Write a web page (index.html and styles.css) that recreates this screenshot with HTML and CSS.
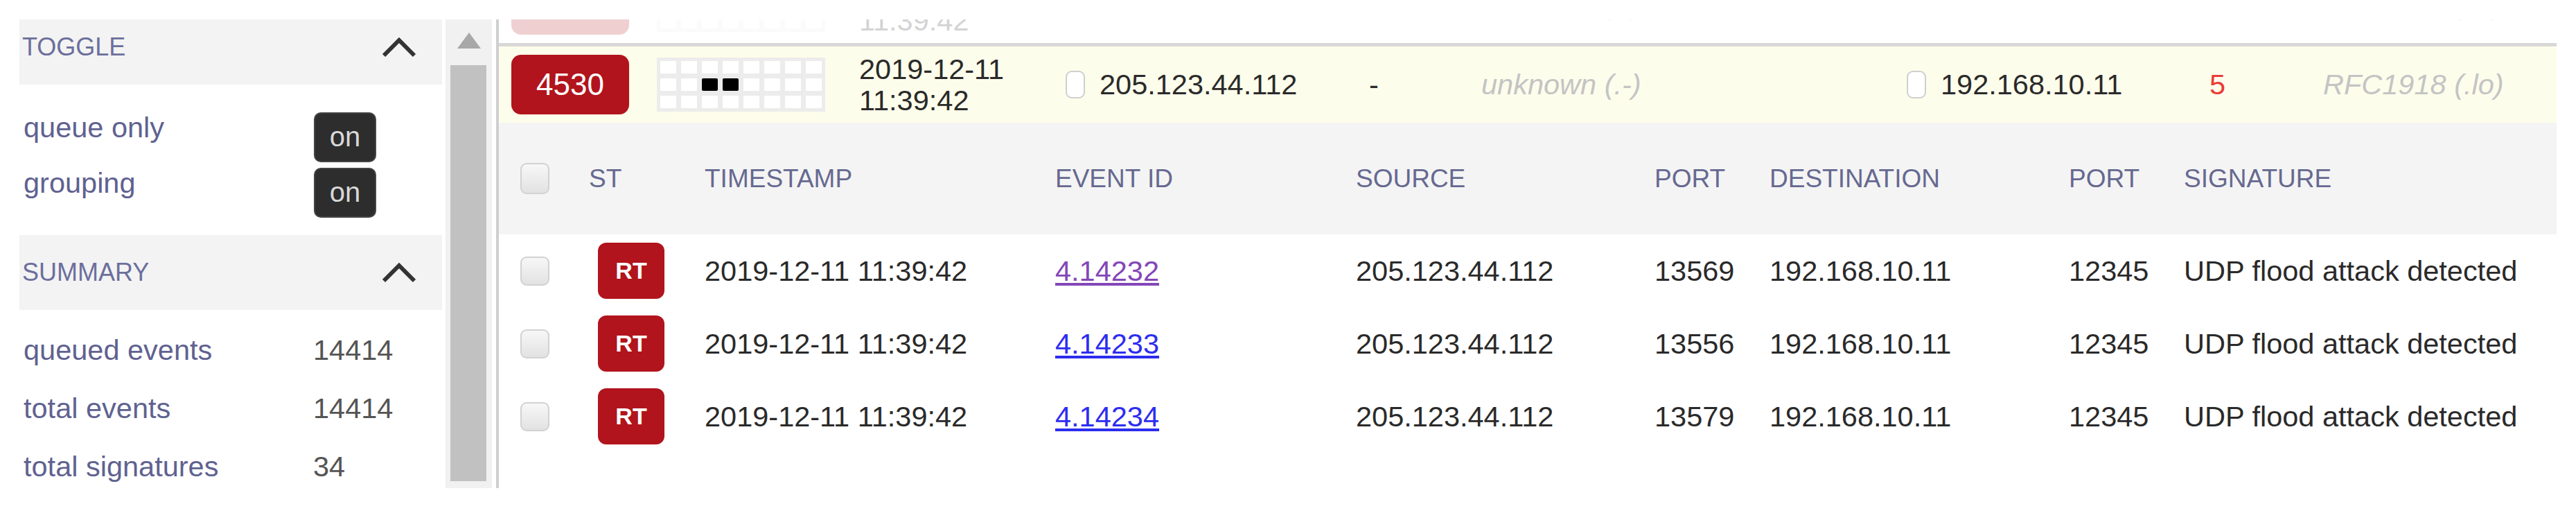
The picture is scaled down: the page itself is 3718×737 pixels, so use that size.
FILE: index.html
```html
<!DOCTYPE html>
<html lang="en">
<head>
  <meta charset="UTF-8" />
  <title>Event queue</title>
  <link rel="stylesheet" href="styles.css">
</head>
<body>

  <div class="app">

    <aside class="sidebar">
      <div class="side-scroll">
        <div class="side-content">

          <div class="panel-head">
            <span>TOGGLE</span>
            <svg class="chevron" width="50" height="30" viewBox="0 0 50 30"><polyline points="3,27 25,5 47,27" /></svg>
          </div>
          <div class="toggles">
            <div class="toggle-row"><span class="label">queue only</span><span class="switch">on</span></div>
            <div class="toggle-row"><span class="label">grouping</span><span class="switch">on</span></div>
          </div>

          <div class="panel-head">
            <span>SUMMARY</span>
            <svg class="chevron" width="50" height="30" viewBox="0 0 50 30"><polyline points="3,27 25,5 47,27" /></svg>
          </div>
          <div class="summary">
            <div class="stat"><span class="label">queued events</span><span class="val">14414</span></div>
            <div class="stat"><span class="label">total events</span><span class="val">14414</span></div>
            <div class="stat"><span class="label">total signatures</span><span class="val">34</span></div>
          </div>

        </div>
      </div>
      <div class="scrollbar">
        <span class="arrow"></span>
        <span class="thumb"></span>
      </div>
    </aside>

    <main class="events">
      <div class="event-list">

        <div class="group-row faded">
          <span class="count">4529</span>
          <span class="cells">
            <i></i><i></i><i></i><i></i><i></i><i></i><i></i><i></i>
            <i></i><i class="on"></i><i></i><i></i><i></i><i></i><i></i><i></i>
            <i></i><i></i><i></i><i></i><i></i><i></i><i></i><i></i>
          </span>
          <span class="when">2019-12-11<br>11:39:42</span>
          <span class="ip"><span class="box"></span>205.123.44.112</span>
          <span>-</span>
          <span class="muted">unknown (.-)</span>
          <span class="ip"><span class="box"></span>192.168.10.11</span>
          <span class="hits">4</span>
          <span class="muted">RFC1918 (.lo)</span>
        </div>

        <div class="group-row open">
          <span class="count">4530</span>
          <span class="cells">
            <i></i><i></i><i></i><i></i><i></i><i></i><i></i><i></i>
            <i></i><i></i><i class="on"></i><i class="on"></i><i></i><i></i><i></i><i></i>
            <i></i><i></i><i></i><i></i><i></i><i></i><i></i><i></i>
          </span>
          <span class="when">2019-12-11<br>11:39:42</span>
          <span class="ip"><span class="box"></span>205.123.44.112</span>
          <span>-</span>
          <span class="muted">unknown (.-)</span>
          <span class="ip"><span class="box"></span>192.168.10.11</span>
          <span class="hits">5</span>
          <span class="muted">RFC1918 (.lo)</span>
        </div>

        <div class="detail-head">
          <span class="check"></span>
          <span>ST</span>
          <span>TIMESTAMP</span>
          <span>EVENT ID</span>
          <span>SOURCE</span>
          <span>PORT</span>
          <span>DESTINATION</span>
          <span>PORT</span>
          <span>SIGNATURE</span>
        </div>

        <div class="detail-row">
          <span class="check"></span>
          <span><span class="st">RT</span></span>
          <span>2019-12-11 11:39:42</span>
          <span><a href="#" class="visited">4.14232</a></span>
          <span>205.123.44.112</span>
          <span>13569</span>
          <span>192.168.10.11</span>
          <span>12345</span>
          <span>UDP flood attack detected</span>
        </div>

        <div class="detail-row">
          <span class="check"></span>
          <span><span class="st">RT</span></span>
          <span>2019-12-11 11:39:42</span>
          <span><a href="#">4.14233</a></span>
          <span>205.123.44.112</span>
          <span>13556</span>
          <span>192.168.10.11</span>
          <span>12345</span>
          <span>UDP flood attack detected</span>
        </div>

        <div class="detail-row">
          <span class="check"></span>
          <span><span class="st">RT</span></span>
          <span>2019-12-11 11:39:42</span>
          <span><a href="#">4.14234</a></span>
          <span>205.123.44.112</span>
          <span>13579</span>
          <span>192.168.10.11</span>
          <span>12345</span>
          <span>UDP flood attack detected</span>
        </div>

      </div>
    </main>

  </div>

</body>
</html>
```

FILE: styles.css
```css
body {
  margin: 0;
  background: #fff;
  font-family: "Liberation Sans", Arial, sans-serif;
  font-size: 41.5px;
  color: #2a2a2a;
}

.app {
  display: flex;
  box-sizing: border-box;
  height: 704px;
  padding: 28px 28px 0;
  overflow: hidden;
}

/* left column */

.sidebar {
  display: flex;
  flex: 0 0 685px;
  height: 676px;
  overflow: hidden;
}

.side-scroll {
  width: 610px;
  margin-right: 5px;
  overflow: hidden;
}

.side-content {
  margin-top: -14px;
}

.panel-head {
  display: flex;
  align-items: center;
  justify-content: space-between;
  height: 108px;
  padding: 0 37px 0 4px;
  background: #f3f3f3;
  color: #6c6f9c;
  font-size: 36px;
}

.chevron polyline {
  fill: none;
  stroke: #333;
  stroke-width: 6;
}

.toggles {
  padding: 40px 0 25px;
}

.toggle-row {
  display: flex;
  align-items: flex-start;
  height: 72px;
  margin-bottom: 8px;
}

.toggle-row:last-child {
  margin-bottom: 0;
}

.label {
  width: 419px;
  padding-left: 6px;
  color: #5f6290;
  line-height: 44px;
}

.switch {
  box-sizing: border-box;
  width: 90px;
  height: 72px;
  border: 2px solid #444;
  border-radius: 10px;
  background: #2d2d2d;
  color: #d8d8d8;
  font-size: 40px;
  line-height: 66px;
  text-align: center;
}

.summary {
  padding-top: 16px;
}

.stat {
  display: flex;
  align-items: center;
  height: 84px;
}

.stat .label {
  width: 418px;
  line-height: 84px;
}

.val {
  color: #555;
}

.scrollbar {
  width: 67px;
  background: #f1f1f1;
}

.arrow {
  display: block;
  width: 0;
  height: 0;
  margin: 19px auto 0;
  border-left: 17px solid transparent;
  border-right: 17px solid transparent;
  border-bottom: 23px solid #a8a8a8;
}

.thumb {
  display: block;
  height: 600px;
  margin: 24px 8px 0 7px;
  background: #c1c1c1;
}

/* event list */

.events {
  flex: 1;
  height: 676px;
  margin-left: 3px;
  border-left: 4px solid #cfcfcf;
  overflow: hidden;
}

.event-list {
  margin-top: -76px;
}

.group-row {
  display: grid;
  grid-template-columns: 210px 292px 298px 438px 162px 614px 437px 164px 1fr;
  align-items: center;
  height: 110px;
  padding-left: 18px;
}

.group-row.faded {
  opacity: 0.2;
}

.group-row.open {
  border-top: 5px solid #d8d8d8;
  background: #fdfdeb;
}

.count {
  width: 170px;
  height: 86px;
  border-radius: 14px;
  background: #b1141c;
  color: #fff;
  font-size: 44px;
  line-height: 86px;
  text-align: center;
}

.cells {
  display: grid;
  grid-template-columns: repeat(8, 23px);
  grid-auto-rows: 18px;
  gap: 7px;
  width: max-content;
  padding: 5px;
  background: #ececec;
}

.cells i {
  background: #fff;
}

.cells i.on {
  background: #000;
  border-radius: 2px;
}

.when {
  line-height: 45px;
}

.ip {
  display: flex;
  align-items: center;
}

.box {
  box-sizing: border-box;
  width: 28px;
  height: 40px;
  margin-right: 21px;
  border: 2px solid #cfcfcf;
  border-radius: 9px;
  background: #fff;
}

.muted {
  color: #c4c4c4;
  font-style: italic;
}

.hits {
  color: #ec3b36;
}

.detail-head,
.detail-row {
  display: grid;
  grid-template-columns: 99px 167px 506px 434px 431px 166px 432px 166px 1fr;
  align-items: center;
  padding-left: 31px;
}

.detail-head {
  height: 161px;
  background: #f4f4f4;
  color: #666991;
  font-size: 37px;
}

.detail-row {
  height: 105px;
}

.check {
  box-sizing: border-box;
  width: 42px;
  height: 42px;
  border: 2px solid #d2d2d2;
  border-radius: 9px;
  background: linear-gradient(#f7f7f7, #e2e2e2);
}

.detail-head .check {
  height: 45px;
}

.st {
  display: inline-block;
  width: 96px;
  height: 81px;
  margin-left: 13px;
  border-radius: 12px;
  background: #b1141c;
  color: #fff;
  font-size: 34px;
  font-weight: bold;
  line-height: 81px;
  text-align: center;
}

a {
  color: #2d2df0;
}

a.visited {
  color: #8347b8;
}
```
